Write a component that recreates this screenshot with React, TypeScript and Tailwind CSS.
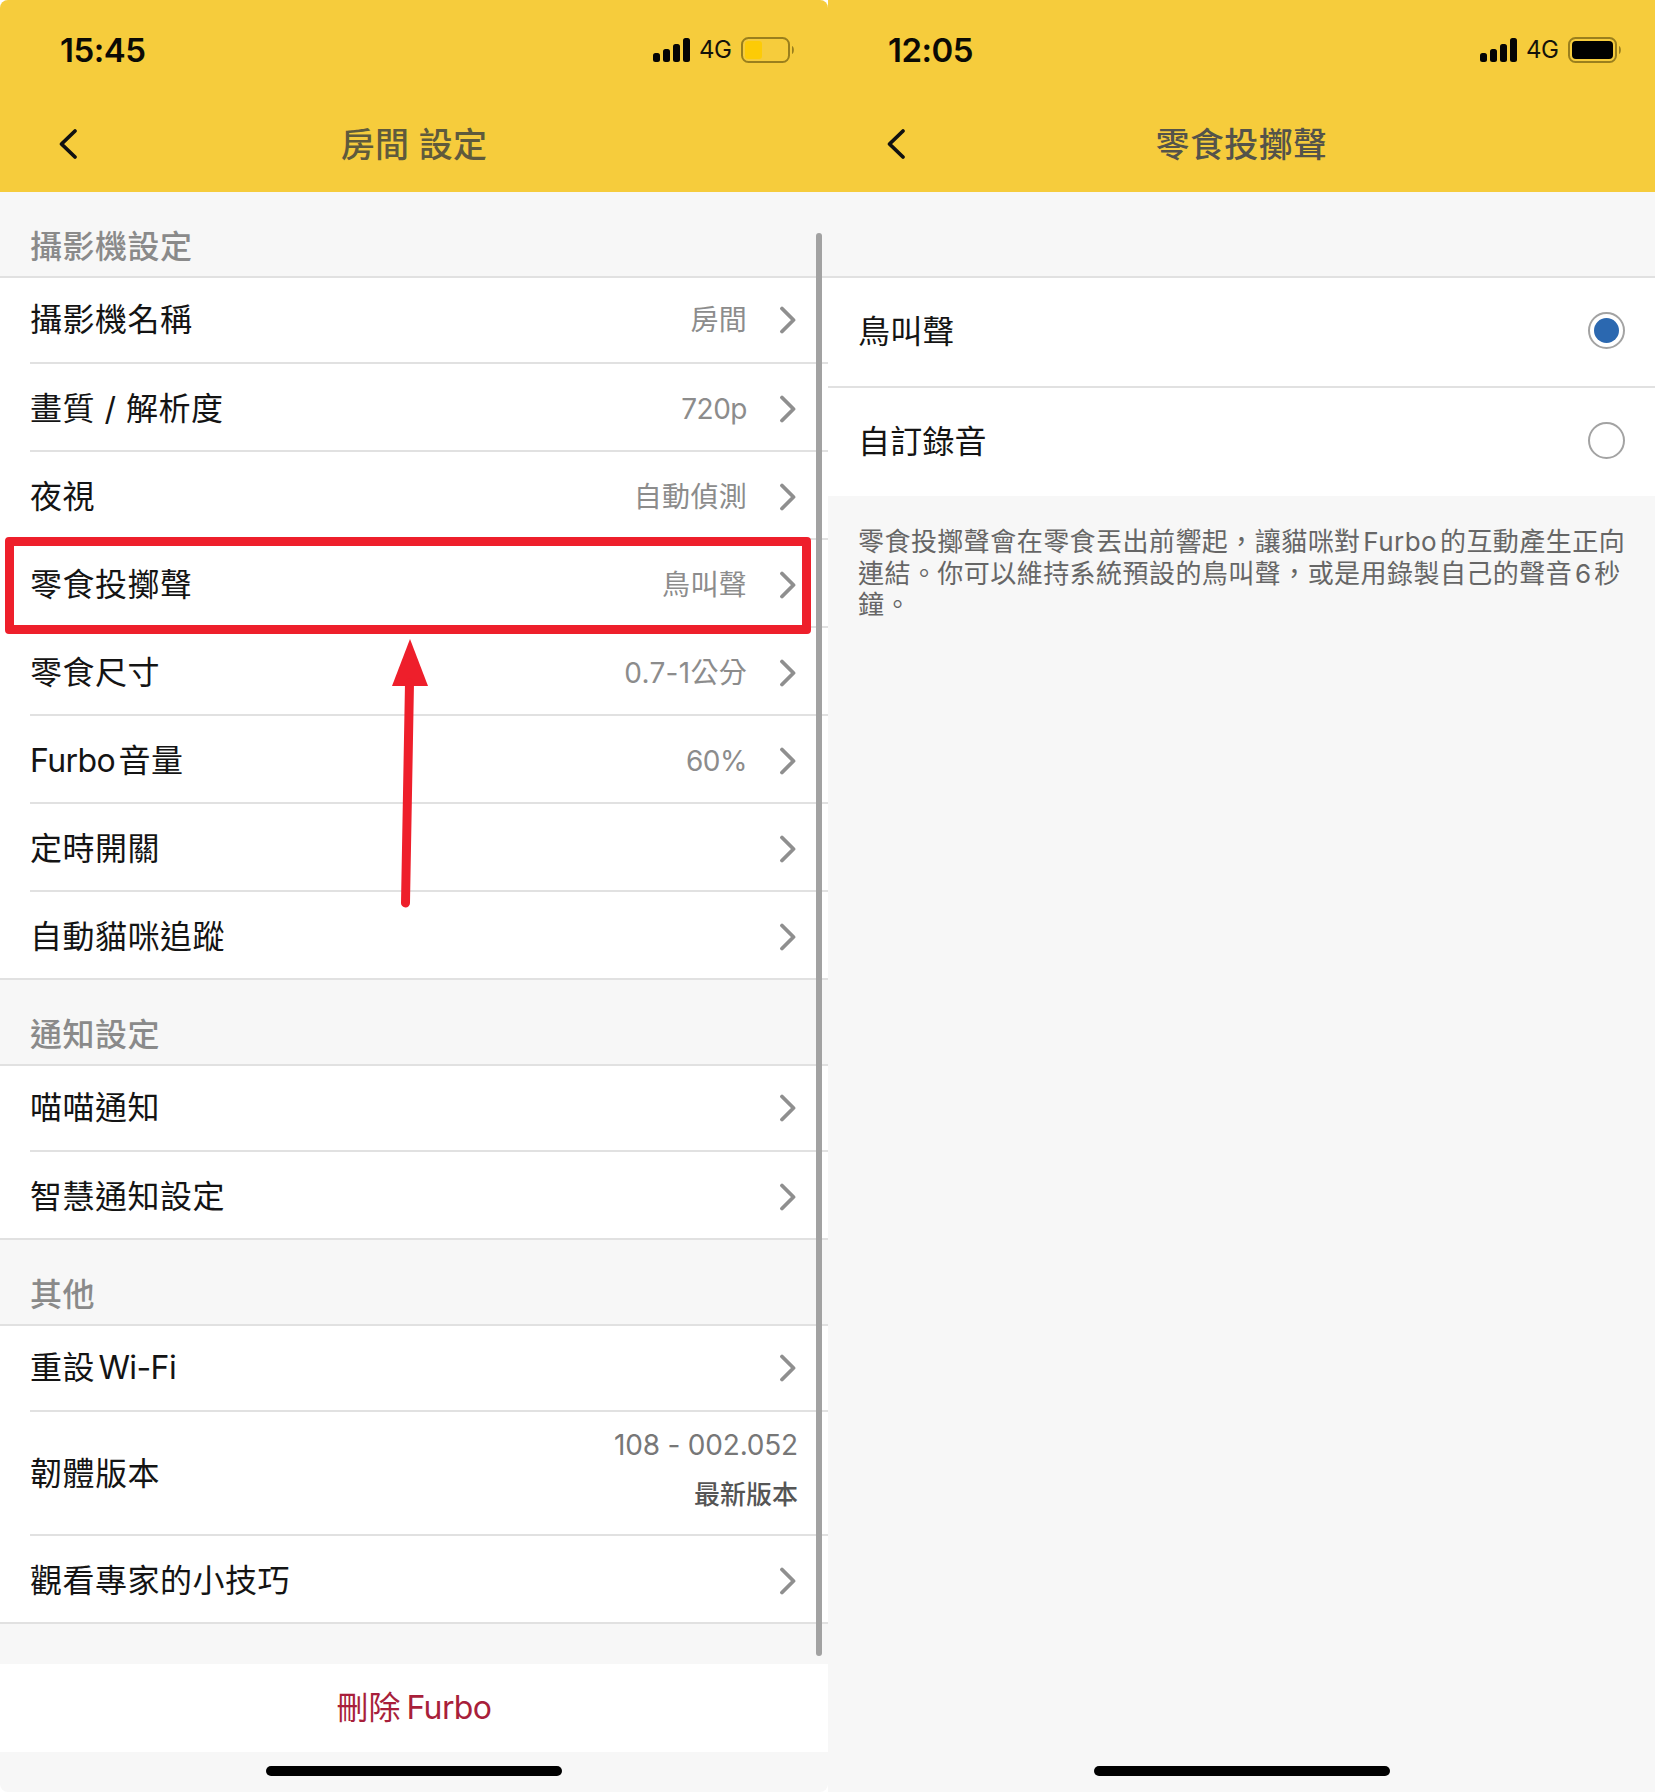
import React from "react";

const Chevron = () => (
  <svg width="18" height="28" viewBox="0 0 18 28" className="shrink-0" fill="none">
    <path d="M3 2.5 L14.5 14 L3 25.5" stroke="#8f8f8f" strokeWidth="3.8" strokeLinecap="round" strokeLinejoin="round" />
  </svg>
);

const Back = () => (
  <svg width="24" height="32" viewBox="0 0 24 32" fill="none" className="shrink-0">
    <path d="M18 3 L4.5 16 L18 29" stroke="#111" strokeWidth="3.8" strokeLinecap="round" strokeLinejoin="round" />
  </svg>
);

const StatusIcons = ({ full }: { full: boolean }) => (
  <div className="flex items-center">
    <svg width="37" height="24" viewBox="0 0 37 24" fill="#050505" className="shrink-0">
      <rect x="0" y="15" width="7" height="9" rx="2.5" />
      <rect x="10" y="11" width="7" height="13" rx="2.5" />
      <rect x="20" y="6" width="7" height="18" rx="2.5" />
      <rect x="30" y="0" width="7" height="24" rx="2.5" />
    </svg>
    <span className="ml-[9px] w-[32px] text-[24px] leading-[24px] tracking-[-0.5px] text-[#14120a]">4G</span>
    <svg width="55" height="26" viewBox="0 0 55 26" fill="none" className="ml-[10px] shrink-0">
      <rect x="1" y="1" width="47" height="24" rx="6.5" stroke="#9a7f1d" strokeWidth="2" />
      {full ? (
        <rect x="4" y="4" width="41" height="18" rx="4" fill="#000" />
      ) : (
        <rect x="4" y="4" width="17" height="18" rx="3" fill="#fdcb06" />
      )}
      <path d="M51 9 C53.5 10 53.5 16 51 17 Z" fill="#9a7f1d" />
    </svg>
  </div>
);

const Header = ({ time, title, full, titleClass }: { time: string; title: string; full: boolean; titleClass: string }) => (
  <div className="h-[192px] shrink-0 bg-[#f6cc3c] flex flex-col">
    <div className="h-[100px] pt-[30px] pl-[60px] pr-[32px] flex justify-between items-start">
      <span className="text-[33px] leading-[40px] font-semibold tracking-[-0.5px] text-[#0b0a05]">{time}</span>
      <div className="pt-[7px]"><StatusIcons full={full} /></div>
    </div>
    <div className="relative flex-1 flex items-start justify-center">
      <div className="absolute left-[57px] top-[28px]"><Back /></div>
      <span className={titleClass}>{title}</span>
    </div>
  </div>
);

const SectionTitle = ({ children }: { children: React.ReactNode }) => (
  <div className="h-[84px] pl-[30px] pb-[5px] flex items-end text-[32px] leading-[48px] tracking-[0.5px] font-medium text-[#8a8a8a]">{children}</div>
);

const Latin = ({ children }: { children: React.ReactNode }) => (
  <span className="tracking-[-0.6px]">{children}</span>
);

const Row = ({ label, value, last, first, num }: { label: React.ReactNode; value?: string; last?: boolean; first?: boolean; num?: boolean }) => (
  <div className={`${first ? "h-[86px]" : "h-[88px]"} bg-white ${last ? "border-b-2 border-[#e1e1e1]" : ""}`}>
    <div className={`h-full ml-[30px] pr-[31px] flex items-center ${first ? "" : "pt-[3px]"} ${last ? "" : "border-b-2 border-[#e1e1e1]"}`}>
      <span className="flex-1 text-[32px] leading-[44px] tracking-[0.5px] text-[#141414]">{label}</span>
      {value && <span className={`mr-[32px] text-[28px] leading-[40px] text-[#8c8c8c] ${num ? "tracking-[-0.5px]" : "tracking-[0.3px]"}`}>{value}</span>}
      <Chevron />
    </div>
  </div>
);

const Group = ({ children }: { children: React.ReactNode }) => (
  <div className="border-t-2 border-[#e1e1e1]">{children}</div>
);

const Radio = ({ on }: { on?: boolean }) => (
  <div className="mb-[3px] w-[37px] h-[37px] rounded-full border-2 border-[#a3a3a3] bg-white flex items-center justify-center shrink-0">
    {on && <div className="w-[25px] h-[25px] rounded-full bg-[#2b68b0]" />}
  </div>
);

export default function App() {
  return (
    <div className="w-[1655px] h-[1792px] bg-white flex font-['Inter','Noto_Sans_CJK_TC',sans-serif] overflow-hidden">
      {/* left phone */}
      <div className="relative w-[828px] h-full bg-[#f7f7f7] flex flex-col rounded-t-[8px] rounded-b-[8px] overflow-hidden shrink-0">
        <Header time="15:45" title="房間 設定" full={false} titleClass="mt-[21px] text-[34px] leading-[48px] tracking-[0.3px] font-medium text-[#5f5a3c]" />
        <SectionTitle>攝影機設定</SectionTitle>
        <Group>
          <Row first label="攝影機名稱" value="房間" />
          <Row label="畫質 / 解析度" value="720p" num />
          <Row label="夜視" value="自動偵測" />
          <Row label="零食投擲聲" value="鳥叫聲" />
          <Row label="零食尺寸" value="0.7-1公分" />
          <Row label={<><Latin>{"Furbo"}</Latin>{"\u200a音量"}</>} value="60%" num />
          <Row label="定時開關" />
          <Row last label="自動貓咪追蹤" />
        </Group>
        <SectionTitle>通知設定</SectionTitle>
        <Group>
          <Row first label="喵喵通知" />
          <Row last label="智慧通知設定" />
        </Group>
        <SectionTitle>其他</SectionTitle>
        <Group>
          <Row first label={<>{"重設\u200a"}<Latin>Wi-Fi</Latin></>} />
          <div className="h-[124px] bg-white">
            <div className="h-full ml-[30px] pr-[30px] flex items-center border-b-2 border-[#e1e1e1]">
              <span className="flex-1 pt-[2px] text-[32px] leading-[44px] tracking-[0.5px] text-[#141414]">韌體版本</span>
              <div className="flex flex-col items-end pb-[8px]">
                <span className="text-[28px] leading-[40px] tracking-[-0.2px] text-[#777]">108 - 002.052</span>
                <span className="mt-[11px] text-[26px] leading-[38px] font-medium text-[#555]">最新版本</span>
              </div>
            </div>
          </div>
          <Row last label="觀看專家的小技巧" />
        </Group>
        <div className="mt-[40px] h-[88px] bg-white flex items-center justify-center text-[32px] leading-[44px] text-[#a81f3b]">{"刪除\u2009"}<Latin>Furbo</Latin></div>
        <div className="flex-1 flex justify-center pt-[14px]">
          <div className="w-[296px] h-[10px] rounded-full bg-black" />
        </div>

        {/* scrollbar */}
        <div className="absolute left-[816px] top-[233px] w-[6px] h-[1423px] rounded-full bg-[#a2a2a2]" />
        {/* highlight box */}
        <div className="absolute left-[5px] top-[537px] w-[806px] h-[97px] border-[9px] border-[#ee1f2b] rounded-[4px]" />
        {/* arrow */}
        <svg className="absolute left-[385px] top-[635px]" width="50" height="280" viewBox="0 0 50 280" fill="none">
          <path d="M25 4 L43 51 L7 51 Z" fill="#ee1f2b" />
          <path d="M24.5 48 L20.5 268" stroke="#ee1f2b" strokeWidth="9" strokeLinecap="round" />
        </svg>
      </div>

      {/* right phone */}
      <div className="flex-1 h-full bg-[#f7f7f7] flex flex-col">
        <Header time="12:05" title="零食投擲聲" full titleClass="mt-[21px] text-[34px] leading-[48px] tracking-[0.4px] font-medium text-[#54534a]" />
        <div className="h-[84px]" />
        <div className="border-t-2 border-[#e1e1e1] bg-white">
          <div className="h-[110px] pl-[30px] pr-[26px] flex items-center justify-between border-b-2 border-[#e1e1e1]">
            <span className="text-[32px] leading-[44px] tracking-[0.2px] text-[#141414]">鳥叫聲</span>
            <div className="pr-[4px]"><Radio on /></div>
          </div>
          <div className="h-[108px] pl-[30px] pr-[26px] flex items-center justify-between">
            <span className="text-[32px] leading-[44px] tracking-[0.2px] text-[#141414]">自訂錄音</span>
            <div className="pr-[4px]"><Radio /></div>
          </div>
        </div>
        <div className="pt-[30px] pl-[30px] text-[26px] leading-[31.5px] tracking-[0.45px] text-[#666]">
          <div>{"零食投擲聲會在零食丟出前響起，讓貓咪對\u200aFurbo\u200a的互動產生正向"}</div>
          <div>{"連結。你可以維持系統預設的鳥叫聲，或是用錄製自己的聲音\u200a6\u200a秒"}</div>
          <div>鐘。</div>
        </div>
        <div className="flex-1 flex items-end justify-center pb-[16px]">
          <div className="w-[296px] h-[10px] rounded-full bg-black" />
        </div>
      </div>
    </div>
  );
}
